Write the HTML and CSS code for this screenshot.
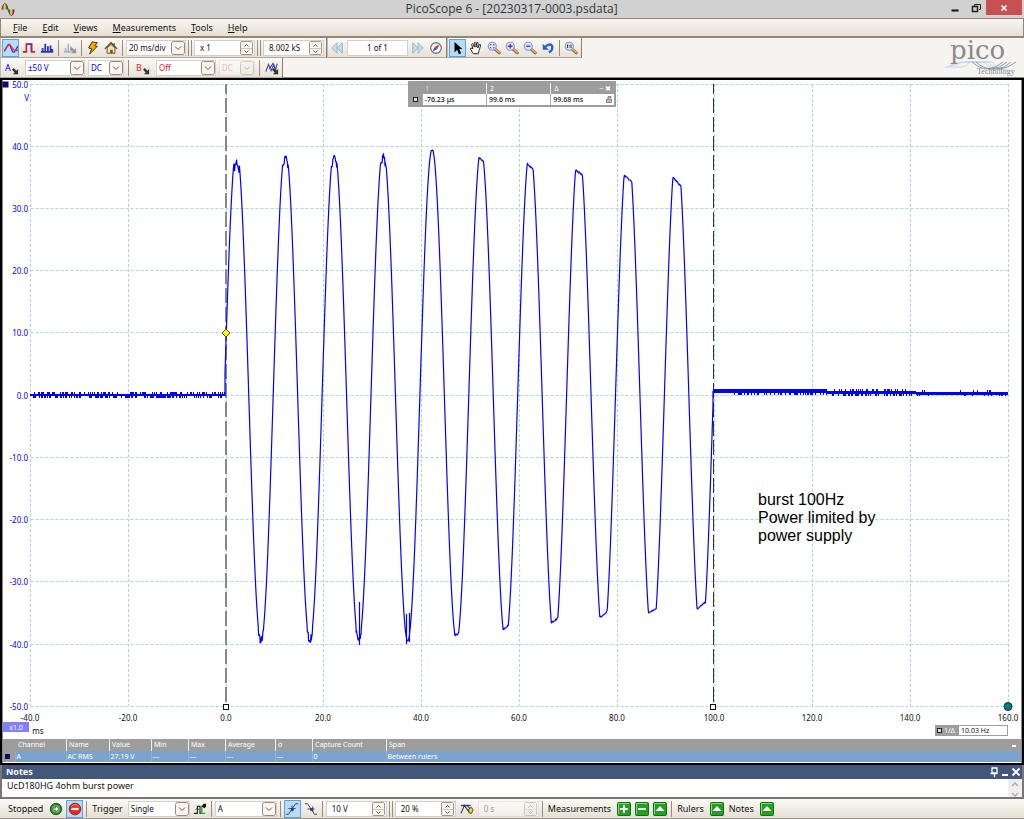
FILE: index.html
```html
<!DOCTYPE html>
<html lang="en">
<head>
<meta charset="utf-8">
<title>PicoScope 6 - [20230317-0003.psdata]</title>
<link rel="stylesheet" href="styles.css">
</head>
<body>
<svg class="defs" aria-hidden="true">
  <symbol id="lens" viewBox="0 0 16 16"><path d="M9.500 9.500l4.500 4" stroke="#8c6a55" stroke-width="3.600" stroke-linecap="round"/><path d="M9.500 9l4.500 4" stroke="#eda45c" stroke-width="2" stroke-linecap="round"/><circle cx="6" cy="6" r="4.600" fill="#dce6fb" stroke="#8795c6" stroke-width="1.300"/></symbol>
  <symbol id="corner" viewBox="0 0 8 8"><path d="M0 2l2-2 3 3 2-2v6H1l2-2z" fill="#333"/></symbol>
  <symbol id="tile" viewBox="0 0 14 14"><rect x=".5" y=".5" width="13" height="13" rx="1" fill="#23a023" stroke="#176b17"/><path d="M1.500 12V1.500H12" stroke="#83df76" fill="none"/></symbol>
  <symbol id="down" viewBox="0 0 14 14"><rect x=".5" y=".5" width="13" height="13" rx="2" fill="#f8f5f0" stroke="#998a7e"/><path d="M4 5.500l3 3 3-3" fill="none" stroke="#665c55"/></symbol>
  <symbol id="tick" viewBox="0 0 11 6"><path d="M3.500 4.500l2-2 2 2" fill="none" stroke="#665c55"/></symbol>
  <symbol id="tock" viewBox="0 0 11 6"><path d="M3.500 1.500l2 2 2-2" fill="none" stroke="#665c55"/></symbol>
</svg>
<div class="app">
  <header class="titlebar">
    <svg class="logo" viewBox="0 0 16 16"><path d="M1 8q0-4 2-6v6z" fill="#d8322b"/><path d="M3 8V2l2-1v7z" fill="#f1cf26"/><path d="M5 8V1q2 2 3 7z" fill="#318d3a"/><path d="M8 8h2v6Q8 12 8 8z" fill="#1c8036"/><path d="M10 8h2v6h-2z" fill="#e9cc30"/><path d="M12 8h2q0 5-2 6z" fill="#c92b26"/><path d="M1 8C2 1 5-2 7.500 8s6 7 6.500 0" fill="none" stroke="#333" stroke-width=".8"/></svg>
    <h1>PicoScope 6 - [20230317-0003.psdata]</h1>
    <div class="winbtns">
      <button aria-label="Minimize"><svg viewBox="0 0 10 10"><path d="M1.500 7.500h7" stroke="#111" stroke-width="2"/></svg></button>
      <button aria-label="Restore"><svg viewBox="0 0 10 10" fill="none" stroke="#222"><path d="M3.500 3V1.500h6v5H8"/><path d="M1.500 3.500h5v5h-5z" stroke-width="1.500"/></svg></button>
      <button class="close" aria-label="Close"><svg viewBox="0 0 10 10"><path d="M2.500 2.500l5 5m0-5l-5 5" stroke="#fff" stroke-width="1.700"/></svg></button>
    </div>
  </header>
  <nav class="menubar">
    <button><u>F</u>ile</button><button><u>E</u>dit</button><button><u>V</u>iews</button><button><u>M</u>easurements</button><button><u>T</u>ools</button><button><u>H</u>elp</button>
  </nav>
  <section class="tools">
    <div class="toolrows">
      <div class="row">
        <div class="group">
          <button class="ib on" aria-label="Scope mode"><svg viewBox="0 0 16 16" fill="none" stroke-width="1.600"><path d="M0 12C3 9 4 3 6 4s3 9 5 9 3-5 5-7" stroke="#2440cc"/><path d="M0 11C3 8 5 2 8 6s5 7 8 4" stroke="#e23b3b"/></svg></button>
          <button class="ib" aria-label="Persistence mode"><svg viewBox="0 0 16 16" fill="none"><path d="M1 12.500h4v-9h6v9h4" stroke="#e01f1f" stroke-width="2"/><path d="M6 3.500h4.500V12" stroke="#3746cf" stroke-width="1.400"/></svg></button>
          <button class="ib" aria-label="Spectrum mode"><svg viewBox="0 0 16 16"><path d="M3 12V8m3 4V3m3 9V6m3 6V5m2 7V9M1 12.500h14" stroke="#2635b5" stroke-width="2"/></svg></button>
          <i class="sep"></i>
          <button class="ib" disabled aria-label="Spectrum options"><svg viewBox="0 0 16 16" opacity=".45"><path d="M3 12V8m3 4V3m3 9V6M1 12.500h8" stroke="#6771b5" stroke-width="2"/><use href="#corner" x="8" y="7" width="8" height="8"/></svg></button>
          <i class="sep"></i>
          <button class="ib" aria-label="Auto setup"><svg viewBox="0 0 16 16"><path d="M7 1l6 1-3 3.500 3 .5-9 9 2.500-6L3 8z" fill="#f4a900" stroke="#3c2600"/></svg></button>
          <button class="ib" aria-label="Home"><svg viewBox="0 0 16 16"><path d="M3.500 8v6h9V8L8 4z" fill="#f8e3ad" stroke="#59492d"/><path d="M1 9l7-7 7 7M11.500 5V2.500" fill="none" stroke="#594522" stroke-width="1.500"/><path d="M7 14v-4h3v4" fill="#785430"/></svg></button>
          <i class="sep"></i>
          <span class="sel"><select aria-label="Timebase"><option>20 ms/div</option></select><svg><use href="#down"/></svg></span>
          <i class="sep dbl"></i>
          <span class="spin"><input aria-label="Zoom" value="x 1"><span><button aria-label="Up"><svg><use href="#tick"/></svg></button><button aria-label="Down"><svg><use href="#tock"/></svg></button></span></span>
          <i class="sep dbl"></i>
          <span class="spin"><input aria-label="Samples" value="8.002 kS"><span><button aria-label="Up"><svg><use href="#tick"/></svg></button><button aria-label="Down"><svg><use href="#tock"/></svg></button></span></span>
        </div>
        <div class="group">
          <button class="ib" aria-label="Previous"><svg viewBox="0 0 16 16" fill="#c5dceb" stroke="#8fb3cd"><path d="M8 2v12L2 8zM14 2v12L8 8z"/></svg></button>
          <input class="page" aria-label="Buffer" value="1 of 1">
          <button class="ib" aria-label="Next"><svg viewBox="0 0 16 16" fill="#c5dceb" stroke="#8fb3cd"><path d="M2 2v12l6-6zM8 2v12l6-6z"/></svg></button>
          <button class="ib" aria-label="Buffer navigator"><svg viewBox="0 0 16 16"><circle cx="8" cy="8" r="6" fill="#fff" stroke="#777" stroke-width="1.500"/><path d="M12 4L9.500 9.500l-3-3z" fill="#e03333"/><path d="M4 12l2.500-5.500 3 3z" fill="#315cc9"/></svg></button>
        </div>
        <div class="group">
          <button class="ib on" aria-label="Select"><svg viewBox="0 0 16 16"><path d="M4 1v12l3-3 2 5 2.500-1-2-5H13z" fill="#000"/></svg></button>
          <button class="ib" aria-label="Pan"><svg viewBox="0 0 16 16"><path d="M5 14.500L1.500 9q0-2 3 0L3 4q.5-2 2 0l1 3V2q1.500-1.500 2 0v5l1-5q1.500-1 1.500 1L10 8l2-4q2-.5 1 2l-1.500 5-1 3.500z" fill="#fff" stroke="#111"/></svg></button>
          <button class="ib" aria-label="Window zoom"><svg viewBox="0 0 16 16"><use href="#lens"/><path d="M4 5V4h1m2 0h1v1m0 2v1H7M5 8H4V7" stroke="#2832b8" fill="none"/></svg></button>
          <button class="ib" aria-label="Zoom in"><svg viewBox="0 0 16 16"><use href="#lens"/><path d="M3.500 6h5M6 3.500v5" stroke="#4c32b8" stroke-width="1.500"/></svg></button>
          <button class="ib" aria-label="Zoom out"><svg viewBox="0 0 16 16"><use href="#lens"/><path d="M3.500 6h5" stroke="#4c32b8" stroke-width="1.500"/></svg></button>
          <button class="ib" aria-label="Undo zoom"><svg viewBox="0 0 16 16"><path d="M4 7q8-6 9 0 0 4-4 6" fill="none" stroke="#2c60cb" stroke-width="2.600"/><path d="M2 3v7h7z" fill="#2c60cb"/></svg></button>
          <i class="sep"></i>
          <button class="ib" aria-label="Zoom 100%"><svg viewBox="0 0 16 16"><use href="#lens"/><path d="M4 4v4m4-4v4M6 4.500v1m0 1v1" stroke="#222"/></svg></button>
        </div>
      </div>
      <div class="row">
        <div class="group channels">
          <button class="ib ch" aria-label="Channel A"><span>A</span><svg viewBox="0 0 8 8"><use href="#corner"/></svg></button>
          <span class="sel blue"><select aria-label="Range A"><option>±50 V</option></select><svg><use href="#down"/></svg></span>
          <span class="sel blue narrow"><select aria-label="Coupling A"><option>DC</option></select><svg><use href="#down"/></svg></span>
          <i class="sep"></i>
          <button class="ib ch red" aria-label="Channel B"><span>B</span><svg viewBox="0 0 8 8"><use href="#corner"/></svg></button>
          <span class="sel red"><select aria-label="Range B"><option>Off</option></select><svg><use href="#down"/></svg></span>
          <span class="sel red narrow off"><select aria-label="Coupling B" disabled><option>DC</option></select><svg><use href="#down"/></svg></span>
          <i class="sep"></i>
          <button class="ib" aria-label="Digital channels"><svg viewBox="0 0 16 16"><path d="M1 12L4 4l3 7 3-7 3 8M5 9l4-6 3 7 2-7" fill="none" stroke="#3b43a2" stroke-width="1.200"/><use href="#corner" x="8" y="8" width="8" height="8"/></svg></button>
        </div>
      </div>
    </div>
    <svg class="brand" viewBox="0 0 80 40" role="img" aria-label="pico Technology"><g fill="none" stroke="#b9cfe6" stroke-width=".8"><path d="M2 29h16q5 0 9-5h22q5 8 16 8M5 28q9 0 14-4h22q7 8 18 8M8 27q9-3 14-3h23q7 8 17 8"/><path d="M29 24q8 7 16 7h12q8-1 16-7M33 24q7 7 18 7M49 31q8-1 15-7m-10 7q8-1 14-7M45 31q8-1 15-7" stroke="#7289a9"/></g><text class="pico" x="7" y="21">pico</text><text class="tech" x="34" y="36">Technology</text></svg>
  </section>
  <main class="scope">
    <div class="plot">
      <svg class="chart" viewBox="3 81 1018 658" role="img" aria-label="Channel A waveform">
        <path class="grid" d="M30.500 84.500H1008M30.500 146.500H1008M30.500 208.500H1008M30.500 270.500H1008M30.500 332.500H1008M30.500 395.500H1008M30.500 457.500H1008M30.500 519.500H1008M30.500 581.500H1008M30.500 644.500H1008M30.500 706.500H1008"/>
        <path class="grid" d="M30.500 84V706M128.500 84V706M226.500 84V706M323.500 84V706M421.500 84V706M519.500 84V706M617.500 84V706M714.500 84V706M812.500 84V706M910.500 84V706M1008.500 84V706"/>
        <path class="ruler one" d="M226 84V704"/><path class="ruler two" d="M713.500 84V704"/>
        <path id="wave" class="wave"/><path id="noise" class="wave noise"/>
        <path d="M226 329l4 4-4 4-4-4z" fill="#ff0" stroke="#554d00"/>
        <rect x="3" y="82" width="5" height="5" fill="#00a" stroke="#113"/>
        <g fill="#fff" stroke="#111"><rect x="223.500" y="704.500" width="5" height="5"/><rect x="710.500" y="704.500" width="5" height="5"/></g>
        <circle cx="1008" cy="706.500" r="4" fill="#007f7f" stroke="#133"/>
        <g class="ylab"><text x="28" y="88">50.0</text><text x="29" y="101">V</text><text x="28" y="150">40.0</text><text x="28" y="212">30.0</text><text x="28" y="274">20.0</text><text x="28" y="336">10.0</text><text x="28" y="399">0.0</text><text x="28" y="461">-10.0</text><text x="28" y="523">-20.0</text><text x="28" y="585">-30.0</text><text x="28" y="648">-40.0</text><text x="28" y="710">-50.0</text></g>
        <g class="xlab"><text x="30" y="721">-40.0</text><text x="128" y="721">-20.0</text><text x="226" y="721">0.0</text><text x="323" y="721">20.0</text><text x="421" y="721">40.0</text><text x="519" y="721">60.0</text><text x="617" y="721">80.0</text><text x="714" y="721">100.0</text><text x="812" y="721">120.0</text><text x="910" y="721">140.0</text><text x="1008" y="721">160.0</text><text x="38" y="734">ms</text></g>
        <rect x="3" y="722" width="26" height="10" fill="#8080ff"/><text class="scale" x="16" y="730">x1.0</text>
        <g class="note"><text x="758" y="505">burst 100Hz</text><text x="758" y="523">Power limited by</text><text x="758" y="541">power supply</text></g>
      </svg>
      <table class="legend">
        <thead><tr><th></th><th class="c1">1</th><th>2</th><th>Δ<span class="lg">‒ ✖</span></th></tr></thead>
        <tbody><tr><th><i class="sq"></i></th><td>-76.23 µs</td><td>99.6 ms</td><td>99.68 ms<svg viewBox="0 0 8 8"><path d="M1.500 4h5v3.500h-5zM3 4V1.500h3V3" fill="#bbb" stroke="#888"/></svg></td></tr></tbody>
      </table>
      <div class="freq"><span><i class="sq"></i>1/Δ</span><b>10.03 Hz</b></div>
    </div>
    <table class="meas">
      <colgroup><col class="w0"><col class="w1"><col class="w2"><col class="w3"><col class="w4"><col class="w4"><col class="w5"><col class="w4"><col class="w6"><col></colgroup>
      <thead><tr><th></th><th class="first">Channel</th><th>Name</th><th>Value</th><th>Min</th><th>Max</th><th>Average</th><th>σ</th><th>Capture Count</th><th>Span<button class="min" aria-label="Collapse measurements"></button></th></tr></thead>
      <tbody><tr><td class="key"><i class="dot"></i></td><td>A</td><td>AC RMS</td><td>27.19 V</td><td>---</td><td>---</td><td>---</td><td>---</td><td>0</td><td>Between rulers</td></tr></tbody>
    </table>
  </main>
  <section class="notes">
    <header><h2>Notes</h2><div><button aria-label="Pin"><svg viewBox="0 0 10 10"><path d="M3 1h5v5H3zM1.500 6.500h7M5.500 6v4" fill="none" stroke="#fff" stroke-width="1.300"/></svg></button><button aria-label="Minimize notes"><svg viewBox="0 0 10 10"><path d="M2 8h6" stroke="#fff" stroke-width="2"/></svg></button><button aria-label="Close notes"><svg viewBox="0 0 10 10"><path d="M1.500 1.500l7 7m0-7l-7 7" stroke="#fff" stroke-width="1.800"/></svg></button></div></header>
    <div class="body"><textarea aria-label="Notes" rows="1">UcD180HG 4ohm burst power</textarea><svg class="scroll" viewBox="0 0 14 18" fill="none" stroke="#aaa" stroke-width="1.300"><path d="M4 7l3-3 3 3M4 14l3 3 3-3"/></svg></div>
  </section>
  <footer class="bottom">
    <span class="txt">Stopped</span>
    <button class="ib" aria-label="Start"><svg viewBox="0 0 16 16"><circle cx="8" cy="8" r="6.500" fill="#278529" stroke="#1c461c"/><circle cx="8" cy="8" r="4.500" fill="#69b461"/><path d="M4.500 7h3V4.500L11.500 8l-4 3.500V9h-3z" fill="#fff" stroke="#244724" stroke-width=".6"/></svg></button>
    <button class="ib on" aria-label="Stop"><svg viewBox="0 0 16 16"><circle cx="8" cy="8" r="6.700" fill="#e42c22" stroke="#8a201a"/><path d="M4 5q4-4 8 0" stroke="#f49b8d" fill="none"/><path d="M4 8h8" stroke="#fff" stroke-width="2.600"/></svg></button>
    <i class="sep"></i><label class="txt" for="trig">Trigger</label>
    <span class="sel"><select id="trig"><option>Single</option></select><svg><use href="#down"/></svg></span>
    <button class="ib" aria-label="Advanced triggers"><svg viewBox="0 0 16 16" fill="none"><path d="M1 13h4V5h3v8h1" stroke="#222" stroke-width="1.300"/><path d="M14 13h-4V5h2" stroke="#2dae35" stroke-width="1.600"/><path d="M10 5l2-3h3v3l-2 2z" fill="#111"/><path d="M3 9l2-2 2 2" stroke="#222"/></svg></button>
    <i class="sep"></i>
    <span class="sel"><select aria-label="Trigger source"><option>A</option></select><svg><use href="#down"/></svg></span>
    <i class="sep"></i>
    <button class="ib on" aria-label="Rising edge"><svg viewBox="0 0 16 16"><path d="M1 14h3L12 2h3M8 4v7M4 7.500h8" stroke="#333" fill="none"/><rect x="7" y="7" width="3" height="3" fill="#1738cf"/></svg></button>
    <button class="ib" aria-label="Falling edge"><svg viewBox="0 0 16 16"><path d="M1 2h3l8 12h3M10 5v6M4 8h8" stroke="#333" fill="none"/><rect x="7" y="7" width="3" height="3" fill="#1738cf"/></svg></button>
    <i class="sep"></i>
    <span class="spin"><input aria-label="Threshold" value="10 V"><span><button aria-label="Up"><svg><use href="#tick"/></svg></button><button aria-label="Down"><svg><use href="#tock"/></svg></button></span></span>
    <i class="sep dbl"></i>
    <span class="spin"><input aria-label="Pre-trigger" value="20 %"><span><button aria-label="Up"><svg><use href="#tick"/></svg></button><button aria-label="Down"><svg><use href="#tock"/></svg></button></span></span>
    <button class="ib delay" aria-label="Trigger delay"><svg viewBox="0 0 16 16" fill="none"><path d="M1 4h11" stroke="#1a32cf" stroke-width="1.600"/><path d="M1 13L5 4l5 7M8 4l4 4" stroke="#333" stroke-width="1.200"/><path d="M10 8l3-2 2 3-2 4-3-1z" fill="#e8df28" stroke="#333"/></svg></button>
    <span class="spin off"><input aria-label="Delay" value="0 s" disabled><span><button aria-label="Up" disabled><svg><use href="#tick"/></svg></button><button aria-label="Down" disabled><svg><use href="#tock"/></svg></button></span></span>
    <i class="sep"></i><span class="txt">Measurements</span>
    <button class="ib" aria-label="Add measurement"><svg viewBox="0 0 14 14"><use href="#tile"/><path d="M7 3v8M3 7h8" stroke="#fff" stroke-width="2"/></svg></button>
    <button class="ib" aria-label="Delete measurement"><svg viewBox="0 0 14 14"><use href="#tile"/><path d="M3 7h8" stroke="#fff" stroke-width="2"/></svg></button>
    <button class="ib" aria-label="Show measurements"><svg viewBox="0 0 14 14"><use href="#tile"/><path d="M2.500 9L7 4l4.500 5z" fill="#fff"/></svg></button>
    <i class="sep"></i><span class="txt">Rulers</span>
    <button class="ib" aria-label="Show rulers"><svg viewBox="0 0 14 14"><use href="#tile"/><path d="M2.500 9L7 4l4.500 5z" fill="#fff"/></svg></button>
    <span class="txt">Notes</span>
    <button class="ib" aria-label="Show notes"><svg viewBox="0 0 14 14"><use href="#tile"/><path d="M2.500 9L7 4l4.500 5z" fill="#fff"/></svg></button>
  </footer>
</div>
<script src="wave.js"></script>
</body>
</html>
```
FILE: styles.css
```css
* { box-sizing: border-box; }
body { margin: 0; background: #9a9490; font: 9px/12px "Noto Sans", "Open Sans", sans-serif; color: #111; }
button, input, select, textarea { font: inherit; color: inherit; border: 0; background: none; padding: 0; margin: 0; border-radius: 0; }
svg { display: block; flex: none; }
.defs { position: absolute; width: 0; height: 0; }
.app { min-height: 817px; display: flex; flex-direction: column; background: #f6f4f0; }
.titlebar { height: 18px; background: #d1d1d1; display: grid; grid-template-columns: 1fr auto 1fr; align-items: center; padding: 0 2px 0 1px; }
.logo { width: 15px; height: 15px; }
.titlebar h1 { margin: 0; font: 12px/18px "Open Sans", sans-serif; color: #333; }
.winbtns { display: flex; justify-content: flex-end; align-self: start; }
.winbtns button { width: 21px; height: 15px; display: grid; place-items: center; }
.winbtns svg { width: 10px; height: 10px; }
.winbtns .close { background: #c75050; width: 36px; }
.menubar { height: 20px; border: 1px solid #9a8478; border-bottom-width: 2px; background: linear-gradient(#f8f6f1, #e6e0d2); display: flex; align-items: center; gap: 15px; padding-left: 12px; }
.menubar button { line-height: 16px; }
.tools { height: 40px; display: flex; justify-content: space-between; border-bottom: 1px solid #8d8782; }
.row { display: flex; height: 20px; }
.group { display: flex; align-items: center; gap: 2px; height: 20px; padding: 0 2px 0 1px; border-right: 1px solid #8f7d72; border-bottom: 1px solid #b3a79d; border-left: 1px solid #c2b8ae; background: linear-gradient(#fbfaf7, #e8e2d6); }
.ib { width: 16px; height: 18px; display: flex; align-items: center; justify-content: center; }
.ib svg { width: 14px; height: 14px; }
.ib.on { background: #b6dcfa; border: 1px solid #57a4e8; width: 17px; }
.sep { width: 1px; height: 16px; background: #9b8a80; margin: 0 1px; }
.sep.dbl { width: 4px; background: none; border: 1px solid #9b8a80; border-width: 0 1px; margin: 0; }
.sel { position: relative; display: block; width: 60px; height: 16px; border: 1px solid #d8cfc6; background: #fff; font-size: 8px; }
.sel select { appearance: none; width: 100%; height: 14px; padding: 0 14px 0 2px; line-height: 14px; outline: 0; }
.sel svg { position: absolute; right: 0; top: 0; width: 14px; height: 14px; pointer-events: none; }
.sel.narrow { width: 36px; }
.blue { color: #00f; }
.red { color: #e22; }
.off { opacity: .4; }
.spin { display: flex; align-items: center; width: 61px; height: 16px; border: 1px solid #d8cfc6; background: #fff; font-size: 8px; }
.spin input { flex: 1; min-width: 0; height: 14px; padding-left: 5px; }
.spin > span { display: flex; flex-direction: column; width: 13px; height: 14px; border: 1px solid #a2958b; border-radius: 2px; margin-right: 1px; }
.spin button { height: 6px; background: #f8f5f0; }
.spin button + button { border-top: 1px solid #cfc5bc; }
.spin svg { width: 11px; height: 6px; }
.page { width: 61px; height: 16px; text-align: center; background: #fff; border: 1px solid #d8cfc6; font-size: 8px; }
.channels { gap: 3px; }
.ch { width: 20px; color: #00f; gap: 1px; }
.ch svg { width: 7px; height: 7px; align-self: flex-end; margin-bottom: 2px; }
.ch.red { color: #e22; }
.brand { width: 80px; height: 40px; margin-right: 1px; overflow: visible; }
.pico { font: 26px "DejaVu Serif", serif; fill: #8a8a8a; }
.tech { font: 8px "Liberation Serif", serif; fill: #888; }
.scope { border: 2px solid #000; box-shadow: inset 1px 0 #888, inset -1px 0 #888; background: #fff; padding: 1px; }
.plot { position: relative; }
.chart { width: 100%; height: auto; overflow: visible; }
.grid { stroke: #a9d7e5; stroke-dasharray: 3 2; fill: none; }
.ruler { stroke-dasharray: 15 4; stroke-dashoffset: 5; }
.one { stroke: #888; stroke-width: 2; }
.two { stroke: #333; }
.wave { fill: none; stroke: #00f; stroke-width: 1.2; stroke-linejoin: bevel; }
.noise { stroke-width: 1; shape-rendering: crispEdges; }
.ylab, .xlab, .scale { font: 8px "Noto Sans", sans-serif; }
.ylab { fill: #00f; text-anchor: end; }
.xlab, .scale { text-anchor: middle; fill: #111; }
.scale { font-size: 7px; fill: #fff; }
.note { font: 16px "Liberation Sans", Arial, sans-serif; fill: #000; }
.legend { position: absolute; top: 0; left: 40%; margin-left: -2px; width: 208px; border: 2px solid #9d9d9d; border-collapse: collapse; table-layout: fixed; font-size: 7px; line-height: 11px; background: #fff; }
.legend th { background: #9d9d9d; color: #fff; font-weight: 400; text-align: left; padding: 0 3px; }
.legend th:first-child { width: 13px; }
.legend td { padding: 0 0 0 2px; border-left: 1px solid #aaa; font-weight: 500; }
.legend thead th + th + th { border-left: 1px solid #eee; }
.legend thead .c1 { color: #f3d8b8; }
.legend svg { width: 8px; height: 8px; float: right; margin: 1px; }
.lg { float: right; }
.sq { display: inline-block; width: 5px; height: 5px; border: 1px solid #222; background: #ddd; }
.freq { position: absolute; right: 13px; bottom: 3px; width: 73px; display: flex; border: 1px solid #9d9d9d; background: #fff; font-size: 7px; line-height: 9px; }
.freq span { background: #9d9d9d; color: #fff; padding: 0 4px 0 1px; }
.freq .sq { margin-right: 2px; }
.freq b { font-weight: 400; padding-left: 2px; }
.meas { width: 100%; border-collapse: collapse; table-layout: fixed; font-size: 7px; line-height: 11px; color: #fff; }
.meas th, .meas td { padding: 0 0 0 3px; text-align: left; font-weight: 400; }
.meas td { padding-left: 1px; }
.meas thead { background: #9d9d9d; line-height: 12px; }
.meas th + th + th { box-shadow: inset 1px 0 #eee; }
.meas td { background: #79a3cd; }
.meas td + td { border-left: 1px solid #8fb0d2; }
.meas .key { background: #9d9d9d; padding-left: 2px; }
.w0 { width: 12px; }
.w1 { width: 51px; }
.w2 { width: 43px; }
.w3 { width: 42px; }
.w4 { width: 37px; }
.w5 { width: 50px; }
.w6 { width: 74px; }
.dot { display: block; width: 5px; height: 5px; background: #00a; border: 1px solid #113; }
.min { float: right; width: 4px; height: 2px; background: #fff; margin: 6px 5px 0 0; }
.notes { border-left: 2px solid #777; border-right: 2px solid #777; }
.notes header { height: 14px; background: #43577b; color: #fff; display: flex; justify-content: space-between; align-items: center; padding: 0 1px 0 4px; }
.notes h2 { margin: 0; font-size: 9px; line-height: 12px; }
.notes header div { display: flex; gap: 1px; }
.notes header svg { width: 10px; height: 10px; }
.body { height: 19px; display: flex; background: #fff; border-bottom: 1px solid #777; }
.body textarea { flex: 1; height: 18px; resize: none; overflow: hidden; padding: 0 5px; line-height: 13px; outline: 0; }
.scroll { width: 14px; height: 18px; background: #eee; }
.bottom { height: 20px; border-top: 1px solid #8c6e62; background: linear-gradient(#fbfaf7, #e6e0d2); display: flex; align-items: center; gap: 2px; padding-left: 6px; }
.bottom .txt { padding: 0 3px 0 2px; }
.bottom .sel { width: 62px; }
.bottom .delay { margin: 0 1px; }
```
FILE: wave.js
```js
(function () {
  var seed = 7;
  function rnd() { seed = (seed * 16807) % 2147483647; return seed / 2147483647; }
  var period = 48.9, start = 224.3, zero = 395, amp = 246;
  var top = [157, 152, 152, 152, 150, 159, 166, 172, 178, 181];
  var low = [647, 647, 647, 643, 635, 628, 621, 615, 611, 606];
  var tops = [0, 0, 0, 0, 0.4, 0.8, 1, 0.7, 0.8, 1.1];
  var lows = [0, 0, 0, 0, 0.5, 0.8, 0.6, 0.8, 0.5, 0.8];
  var d = 'M225 396', n = '', x, y;
  function bar(px, a, b) { n += 'M' + (px + 0.5) + ' ' + a + 'V' + b; }

  for (x = 225; x < 713; x += 0.4) {
    var k = Math.min(9, Math.floor((x - start) / period));
    var ph = (x - start - k * period) / period;
    y = zero - amp * Math.sin(2 * Math.PI * ph);
    var up = ph < 0.5;
    var off = (ph - (up ? 0.25 : 0.75)) * period;
    var near = Math.abs(off);
    if (up) {
      if (k < 4) y = near < 2.6 ? top[k] + near * 4 + rnd() * 7 : Math.max(y, top[k]);
      else y = Math.max(y, top[k] + Math.round(tops[k] * off) + (rnd() < 0.3 ? 1 : 0));
    } else {
      if (k < 3) y = near < 2.6 ? low[k] - near * 4 - rnd() * 9 : Math.min(y, low[k]);
      else y = Math.min(y, low[k] - Math.round(lows[k] * off) - (rnd() < 0.3 ? 1 : 0));
    }
    d += 'L' + x.toFixed(1) + ' ' + y.toFixed(1);
  }
  d += 'L713 391M359.500 602V645M406.500 614V644M409.500 613V642';

  for (x = 30; x < 225; x++) bar(x, rnd() < 0.45 ? 392 : 394, rnd() < 0.55 ? 398 : 396);
  for (x = 713; x < 827; x++) bar(x, 389, x > 732 && rnd() < 0.35 ? 395 : 393);
  for (x = 827; x < 1008; x++) {
    var late = x > 915 ? 1 : 0;
    bar(x, rnd() < 0.3 - late * 0.15 ? 389 + late : 391 + late, rnd() < 0.3 - late * 0.15 ? 396 : 394 + late);
  }
  document.getElementById('wave').setAttribute('d', d);
  document.getElementById('noise').setAttribute('d', n);
})();
```
